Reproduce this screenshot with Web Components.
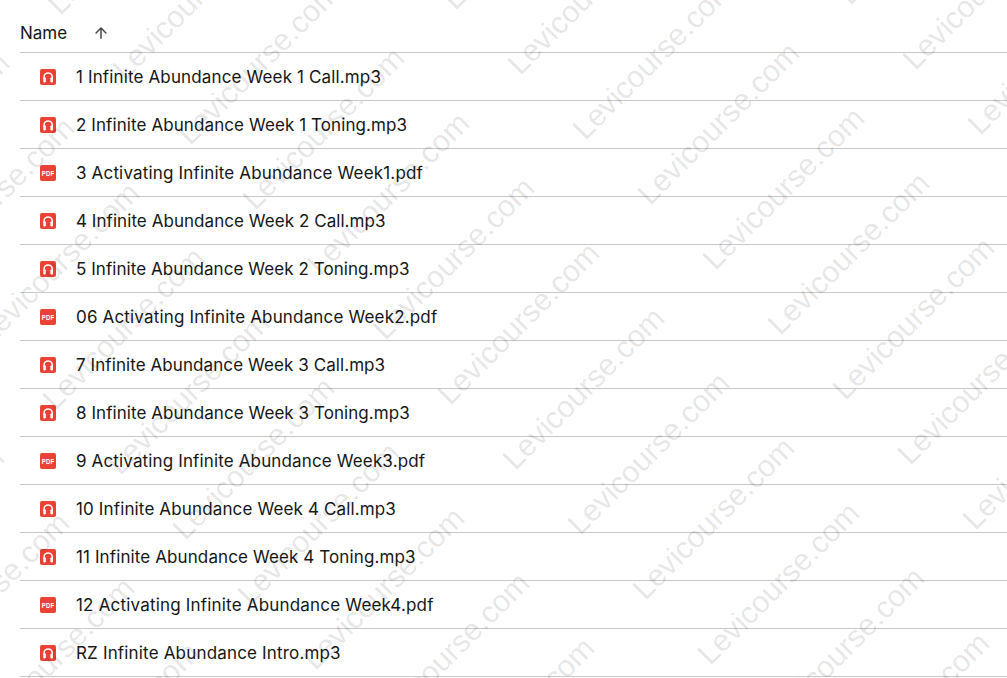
<!DOCTYPE html><html><head><meta charset="utf-8"><style>html,body{margin:0;background:#fff;height:678px;overflow:hidden}body{position:relative}</style></head><body>
<file-list>
<list-header>Name</list-header>
<file-row kind="audio">1 Infinite Abundance Week 1 Call.mp3</file-row>
<file-row kind="audio" style="letter-spacing:.09px">2 Infinite Abundance Week 1 Toning.mp3</file-row>
<file-row kind="pdf" style="letter-spacing:.165px">3 Activating Infinite Abundance Week1.pdf</file-row>
<file-row kind="audio" style="letter-spacing:.055px">4 Infinite Abundance Week 2 Call.mp3</file-row>
<file-row kind="audio" style="letter-spacing:.06px">5 Infinite Abundance Week 2 Toning.mp3</file-row>
<file-row kind="pdf" style="letter-spacing:.165px">06 Activating Infinite Abundance Week2.pdf</file-row>
<file-row kind="audio" style="letter-spacing:.08px">7 Infinite Abundance Week 3 Call.mp3</file-row>
<file-row kind="audio" style="letter-spacing:.06px">8 Infinite Abundance Week 3 Toning.mp3</file-row>
<file-row kind="pdf">9 Activating Infinite Abundance Week3.pdf</file-row>
<file-row kind="audio">10 Infinite Abundance Week 4 Call.mp3</file-row>
<file-row kind="audio" style="letter-spacing:.11px">11 Infinite Abundance Week 4 Toning.mp3</file-row>
<file-row kind="pdf" style="letter-spacing:.19px">12 Activating Infinite Abundance Week4.pdf</file-row>
<file-row kind="audio" style="letter-spacing:.17px">RZ Infinite Abundance Intro.mp3</file-row>
</file-list>
<water-mark></water-mark>
<script>
class FileList extends HTMLElement{constructor(){super();this.attachShadow({mode:'open'}).innerHTML=`<style>:host{display:flex;flex-direction:column;padding-left:20px;font-family:Inter,"Liberation Sans",sans-serif;color:#161616}</style><slot></slot>`}}
class ListHeader extends HTMLElement{constructor(){super();this.attachShadow({mode:'open'}).innerHTML=`<style>:host{display:flex;align-items:center;height:39px;padding-top:13px;border-bottom:1px solid #c7c7c7;font-size:17px}
.n{width:72px}svg{width:18px;height:18px;display:block;fill:#444746}</style><span class="n"><slot></slot></span><svg viewBox="0 0 24 24"><path d="M13 19V7.83l4.88 4.88c.39.39 1.03.39 1.42 0 .39-.39.39-1.02 0-1.41l-6.59-6.59a.996.996 0 0 0-1.41 0l-6.6 6.58c-.39.39-.39 1.02 0 1.41.39.39 1.02.39 1.41 0L11 7.83V19c0 .55.45 1 1 1s1-.45 1-1z"/></svg>`}}
const ICONS={audio:`<svg viewBox="0 0 16 16"><rect width="16" height="16" rx="2" fill="#ea4335"/><path d="M4.05 10V8a4.1 4.1 0 0 1 8.2 0V10" fill="none" stroke="#fff" stroke-width="1.5"/><rect x="3.3" y="8.4" width="2.6" height="5" rx=".8" fill="#fff"/><rect x="10.4" y="8.4" width="2.6" height="5" rx=".8" fill="#fff"/></svg>`,
pdf:`<svg viewBox="0 0 16 16"><rect width="16" height="16" rx="2" fill="#ea4335"/><text x="8" y="10.8" text-anchor="middle" font-family="Liberation Sans" font-weight="700" font-size="7.4" textLength="12.4" lengthAdjust="spacingAndGlyphs" fill="#fff">PDF</text></svg>`};
class FileRow extends HTMLElement{constructor(){super();this.attachShadow({mode:'open'})}
connectedCallback(){this.shadowRoot.innerHTML=`<style>:host{display:flex;align-items:center;height:47px;border-bottom:1px solid #c7c7c7;font-size:17px;letter-spacing:.14px;white-space:nowrap}
.i{width:16px;height:16px;margin-left:20px;margin-right:20px;flex:none}svg{display:block;width:16px;height:16px}</style><span class="i">${ICONS[this.getAttribute('kind')]}</span><span><slot></slot></span>`}}
class WaterMark extends HTMLElement{constructor(){super();const s=this.attachShadow({mode:'open'});let h=`<style>:host{position:absolute;inset:0;overflow:hidden;pointer-events:none;display:block}span{position:absolute;font:30.5px/1 "Liberation Sans",Arial,sans-serif;color:rgba(0,0,0,.11);white-space:nowrap;transform-origin:0 0;transform:rotate(-45deg) translateY(-.8465em)}</style>`;
for(let i=-14;i<=14;i++)for(let j=-6;j<=6;j++){const x=650.2+i*65+j*200,y=206+i*65-j*200;if(x<-260||x>1260||y<-20||y>900)continue;h+=`<span style="left:${x}px;top:${y}px">Levicourse.com</span>`}
s.innerHTML=h}}
customElements.define('file-list',FileList);customElements.define('list-header',ListHeader);customElements.define('file-row',FileRow);customElements.define('water-mark',WaterMark);
</script></body></html>
